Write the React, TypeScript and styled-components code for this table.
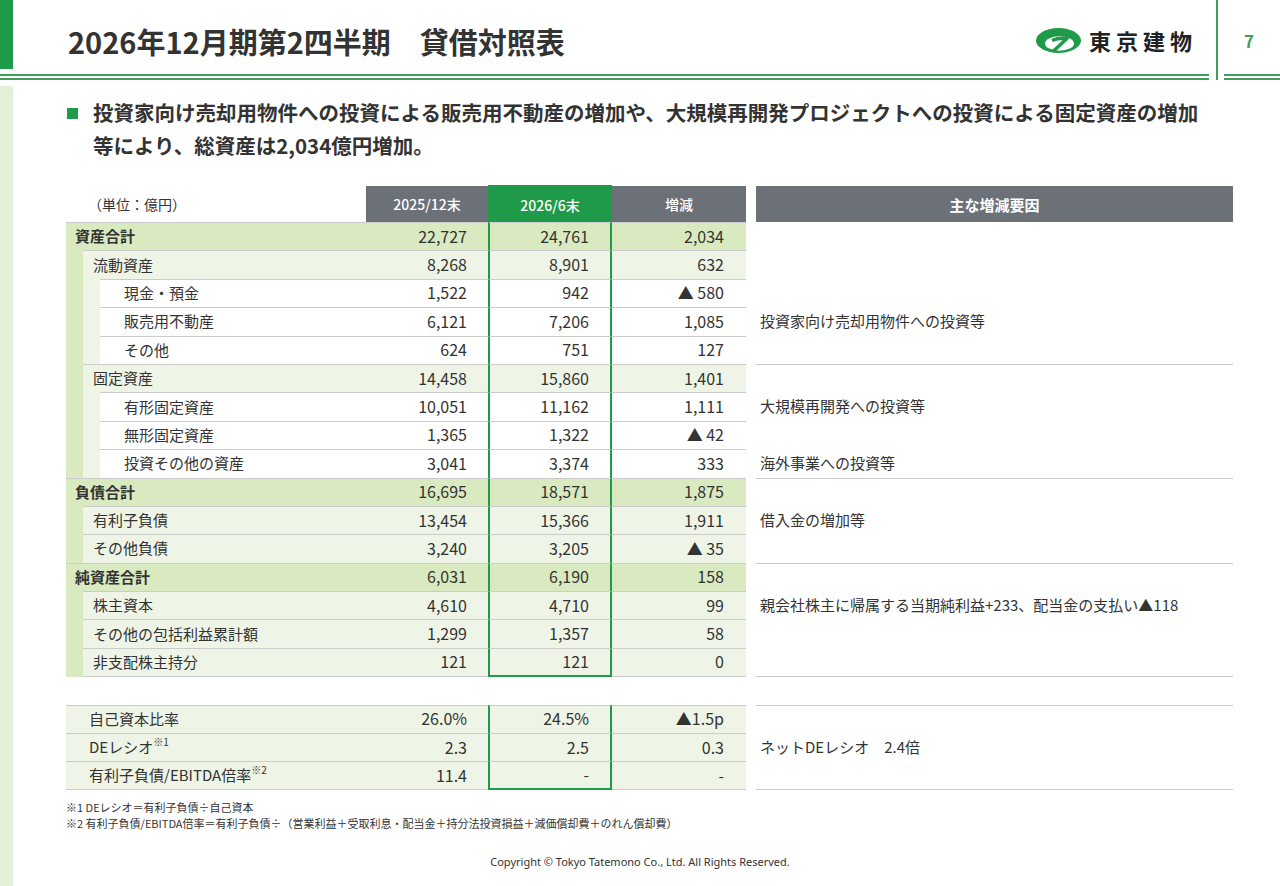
import React from 'react'
import styled, { createGlobalStyle } from 'styled-components'

const GREEN = '#1e9a48'
const RULE = '#3f9e5a'
const GRAY_HEAD = '#6b7177'
const TOTAL_BG = '#d9eac0'
const SUB_BG = '#eff5e6'
const LINE = '#cbcbcb'
const TEXT = '#333333'

const GlobalStyle = createGlobalStyle`
  html, body {
    margin: 0;
    padding: 0;
    background: #ffffff;
  }
  body {
    font-family: "Noto Sans CJK JP", "Noto Sans", sans-serif;
    color: ${TEXT};
  }
`

const Page = styled.div`
  width: 1280px;
  height: 886px;
  display: flex;
  flex-direction: column;
  overflow: hidden;
  background: #fff;
`

// ---------- header ----------
const Header = styled.header`
  display: flex;
  height: 80px;
  flex-shrink: 0;
`

const HeaderMain = styled.div`
  width: 1209px;
  display: flex;
  flex-direction: column;
`

const TopBar = styled.div`
  height: 74px;
  display: flex;
  align-items: flex-start;
`

const GreenTab = styled.div`
  width: 13px;
  height: 69px;
  background: ${GREEN};
`

const Title = styled.h1`
  margin: 0 0 0 55px;
  padding-top: 22px;
  font-size: 29px;
  line-height: 38px;
  font-weight: 700;
  color: ${TEXT};
  white-space: pre;
`

const Logo = styled.div`
  margin-left: auto;
  margin-right: 12px;
  margin-top: 28px;
  display: flex;
  align-items: center;
  gap: 8px;
`

const LogoText = styled.span`
  font-size: 22px;
  line-height: 25px;
  font-weight: 700;
  letter-spacing: 5px;
  color: #222;
`

const DoubleRule = styled.div`
  height: 2px;
  border-top: 2px solid ${RULE};
  border-bottom: 2px solid ${RULE};
`

const Divider = styled.div`
  width: 2px;
  height: 80px;
  margin: 0 6px 0 7px;
  background: ${RULE};
`

const HeaderSide = styled.div`
  flex: 1;
  display: flex;
  flex-direction: column;
`

const PageNum = styled.div`
  height: 74px;
  display: flex;
  align-items: center;
  justify-content: center;
  padding-top: 7px;
  box-sizing: border-box;
  padding-right: 6px;
  font-size: 17px;
  font-weight: 700;
  color: ${RULE};
`

// ---------- body ----------
const Body = styled.div`
  flex: 1;
  display: flex;
`

const SideStrip = styled.div`
  width: 13px;
  margin-top: 6px;
  background: #e5f0d8;
`

const Main = styled.main`
  flex: 1;
  padding-left: 53px;
  display: flex;
  flex-direction: column;
`

const Lead = styled.div`
  margin-top: 16px;
  display: flex;
  align-items: flex-start;
`

const Bullet = styled.span`
  width: 11px;
  height: 11px;
  margin: 12px 15px 0 1px;
  background: ${GREEN};
  flex-shrink: 0;
`

const LeadText = styled.p`
  margin: 0;
  font-size: 20.5px;
  line-height: 33px;
  font-weight: 700;
  color: ${TEXT};
`

const Table = styled.div`
  margin-top: 24px;
  display: flex;
  flex-direction: column;
`

const Row = styled.div<{ $h?: number }>`
  display: grid;
  grid-template-columns: 300px 122px 124px 134px 10px 477px;
  height: ${(p) => p.$h ?? 28.4}px;
`

const UnitCell = styled.div`
  display: flex;
  align-items: center;
  padding-left: 22px;
  font-size: 14px;
`

const HeadCell = styled.div<{ $green?: boolean; $bold?: boolean }>`
  display: flex;
  align-items: center;
  justify-content: center;
  background: ${(p) => (p.$green ? GREEN : GRAY_HEAD)};
  color: #fff;
  font-size: ${(p) => (p.$bold ? 15 : 14)}px;
  font-weight: ${(p) => (p.$bold ? 700 : 500)};
  ${(p) => (p.$green ? `border: 2px solid ${GREEN}; border-bottom: none; margin-top: -1px;` : '')}
`

const rowBg = (level: number) => (level === 0 ? TOTAL_BG : level === 1 ? SUB_BG : '#ffffff')

const LabelCell = styled.div`
  display: flex;
`

const Strip = styled.div<{ $level: number }>`
  width: 17px;
  flex-shrink: 0;
  background: ${(p) => (p.$level === 0 ? TOTAL_BG : SUB_BG)};
`

const LabelText = styled.div<{ $level: number; $last?: boolean; $pad: number }>`
  flex: 1;
  display: flex;
  align-items: center;
  padding-left: ${(p) => p.$pad}px;
  padding-bottom: 2px;
  background: ${(p) => rowBg(p.$level)};
  border-top: 1.5px solid ${LINE};
  ${(p) => (p.$last ? `border-bottom: 1.5px solid ${LINE};` : '')}
  font-size: 15px;
  font-weight: ${(p) => (p.$level === 0 ? 700 : 400)};
  white-space: nowrap;
`

const NumCell = styled.div<{ $level: number; $hl?: boolean; $last?: boolean; $pad: number }>`
  display: flex;
  align-items: center;
  justify-content: flex-end;
  padding-right: ${(p) => p.$pad}px;
  padding-bottom: 2px;
  background: ${(p) => rowBg(p.$level)};
  border-top: 1.5px solid ${LINE};
  ${(p) => (p.$last ? `border-bottom: 1.5px solid ${LINE};` : '')}
  ${(p) =>
    p.$hl
      ? `border-left: 2px solid ${GREEN}; border-right: 2px solid ${GREEN};` +
        (p.$last ? `border-bottom: 2px solid ${GREEN};` : '')
      : ''}
  font-size: 16px;
`

const ReasonCell = styled.div<{ $top?: boolean; $bottom?: boolean }>`
  display: flex;
  align-items: center;
  padding-left: 4px;
  padding-bottom: 2px;
  border-top: 1.5px solid ${(p) => (p.$top ? LINE : 'transparent')};
  border-bottom: 1.5px solid ${(p) => (p.$bottom ? LINE : 'transparent')};
  font-size: 15px;
  white-space: nowrap;
`

const Spacer = styled.div``

const Sup = styled.sup`
  font-size: 10px;
  vertical-align: 7px;
  line-height: 0;
`

const Notes = styled.div`
  margin-top: 9px;
  font-size: 11px;
  line-height: 16px;
  color: ${TEXT};
`

const Copyright = styled.div`
  margin-top: 23px;
  margin-left: -66px;
  text-align: center;
  font-family: "Noto Sans", "Noto Sans CJK JP", sans-serif;
  font-size: 11px;
  color: ${TEXT};
`

const LogoMark = () => (
  <svg width="45" height="25" viewBox="0 0 45 25">
    <ellipse cx="22.5" cy="12.5" rx="22.5" ry="12.5" fill={GREEN} />
    <ellipse cx="23.5" cy="15.5" rx="14.5" ry="7.2" fill="#fff" />
    <path d="M16 12.5 Q23 9.5 31 10.5 L17 23.5" fill="none" stroke={GREEN} strokeWidth="3.4" strokeLinejoin="round" />
  </svg>
)

type Item = {
  label: string
  level: number
  a: string
  b: string
  c: string
  reason?: string
  line?: boolean
}

const items: Item[] = [
  { label: '資産合計', level: 0, a: '22,727', b: '24,761', c: '2,034' },
  { label: '流動資産', level: 1, a: '8,268', b: '8,901', c: '632' },
  { label: '現金・預金', level: 2, a: '1,522', b: '942', c: '▲ 580' },
  { label: '販売用不動産', level: 2, a: '6,121', b: '7,206', c: '1,085', reason: '投資家向け売却用物件への投資等' },
  { label: 'その他', level: 2, a: '624', b: '751', c: '127' },
  { label: '固定資産', level: 1, a: '14,458', b: '15,860', c: '1,401', line: true },
  { label: '有形固定資産', level: 2, a: '10,051', b: '11,162', c: '1,111', reason: '大規模再開発への投資等' },
  { label: '無形固定資産', level: 2, a: '1,365', b: '1,322', c: '▲ 42' },
  { label: '投資その他の資産', level: 2, a: '3,041', b: '3,374', c: '333', reason: '海外事業への投資等' },
  { label: '負債合計', level: 0, a: '16,695', b: '18,571', c: '1,875', line: true },
  { label: '有利子負債', level: 1, a: '13,454', b: '15,366', c: '1,911', reason: '借入金の増加等' },
  { label: 'その他負債', level: 1, a: '3,240', b: '3,205', c: '▲ 35' },
  { label: '純資産合計', level: 0, a: '6,031', b: '6,190', c: '158', line: true },
  {
    label: '株主資本',
    level: 1,
    a: '4,610',
    b: '4,710',
    c: '99',
    reason: '親会社株主に帰属する当期純利益+233、配当金の支払い▲118',
  },
  { label: 'その他の包括利益累計額', level: 1, a: '1,299', b: '1,357', c: '58' },
  { label: '非支配株主持分', level: 1, a: '121', b: '121', c: '0' },
]

type Ratio = { label: React.ReactNode; a: string; b: string; c: string; reason?: string }

const ratios: Ratio[] = [
  { label: '自己資本比率', a: '26.0%', b: '24.5%', c: '▲1.5p' },
  {
    label: (
      <span>
        DEレシオ<Sup>※1</Sup>
      </span>
    ),
    a: '2.3',
    b: '2.5',
    c: '0.3',
    reason: 'ネットDEレシオ　2.4倍',
  },
  {
    label: (
      <span>
        有利子負債/EBITDA倍率<Sup>※2</Sup>
      </span>
    ),
    a: '11.4',
    b: '-',
    c: '-',
  },
]

const labelPad = [9, 10, 24]

export default function App() {
  return (
    <Page>
      <GlobalStyle />
      <Header>
        <HeaderMain>
          <TopBar>
            <GreenTab />
            <Title>{'2026年12月期第2四半期　貸借対照表'}</Title>
            <Logo>
              <LogoMark />
              <LogoText>東京建物</LogoText>
            </Logo>
          </TopBar>
          <DoubleRule />
        </HeaderMain>
        <Divider />
        <HeaderSide>
          <PageNum>7</PageNum>
          <DoubleRule />
        </HeaderSide>
      </Header>

      <Body>
        <SideStrip />
        <Main>
          <Lead>
            <Bullet />
            <LeadText>
              投資家向け売却用物件への投資による販売用不動産の増加や、大規模再開発プロジェクトへの投資による固定資産の増加
              <br />
              等により、総資産は2,034億円増加。
            </LeadText>
          </Lead>

          <Table>
            <Row $h={36}>
              <UnitCell>（単位：億円）</UnitCell>
              <HeadCell>2025/12末</HeadCell>
              <HeadCell $green>2026/6末</HeadCell>
              <HeadCell>増減</HeadCell>
              <Spacer />
              <HeadCell $bold>主な増減要因</HeadCell>
            </Row>

            {items.map((it, i) => {
              const last = i === items.length - 1
              return (
                <Row key={it.label}>
                  <LabelCell>
                    {Array.from({ length: it.level }).map((_, s) => (
                      <Strip key={s} $level={s} />
                    ))}
                    <LabelText $level={it.level} $last={last} $pad={labelPad[it.level]}>
                      {it.label}
                    </LabelText>
                  </LabelCell>
                  <NumCell $level={it.level} $last={last} $pad={21}>
                    {it.a}
                  </NumCell>
                  <NumCell $level={it.level} $last={last} $hl $pad={21}>
                    {it.b}
                  </NumCell>
                  <NumCell $level={it.level} $last={last} $pad={22}>
                    {it.c}
                  </NumCell>
                  <Spacer />
                  <ReasonCell $top={it.line} $bottom={last}>
                    {it.reason}
                  </ReasonCell>
                </Row>
              )
            })}

            <Row />

            {ratios.map((r, i) => {
              const first = i === 0
              const last = i === ratios.length - 1
              return (
                <Row key={i}>
                  <LabelText $level={1} $last={last} $pad={23}>
                    {r.label}
                  </LabelText>
                  <NumCell $level={1} $last={last} $pad={21}>
                    {r.a}
                  </NumCell>
                  <NumCell $level={1} $last={last} $hl $pad={21}>
                    {r.b}
                  </NumCell>
                  <NumCell $level={1} $last={last} $pad={22}>
                    {r.c}
                  </NumCell>
                  <Spacer />
                  <ReasonCell $top={first} $bottom={last}>
                    {r.reason}
                  </ReasonCell>
                </Row>
              )
            })}
          </Table>

          <Notes>
            <div>※1 DEレシオ＝有利子負債÷自己資本</div>
            <div>※2 有利子負債/EBITDA倍率＝有利子負債÷（営業利益＋受取利息・配当金＋持分法投資損益＋減価償却費＋のれん償却費）</div>
          </Notes>
          <Copyright>Copyright © Tokyo Tatemono Co., Ltd. All Rights Reserved.</Copyright>
        </Main>
      </Body>
    </Page>
  )
}
